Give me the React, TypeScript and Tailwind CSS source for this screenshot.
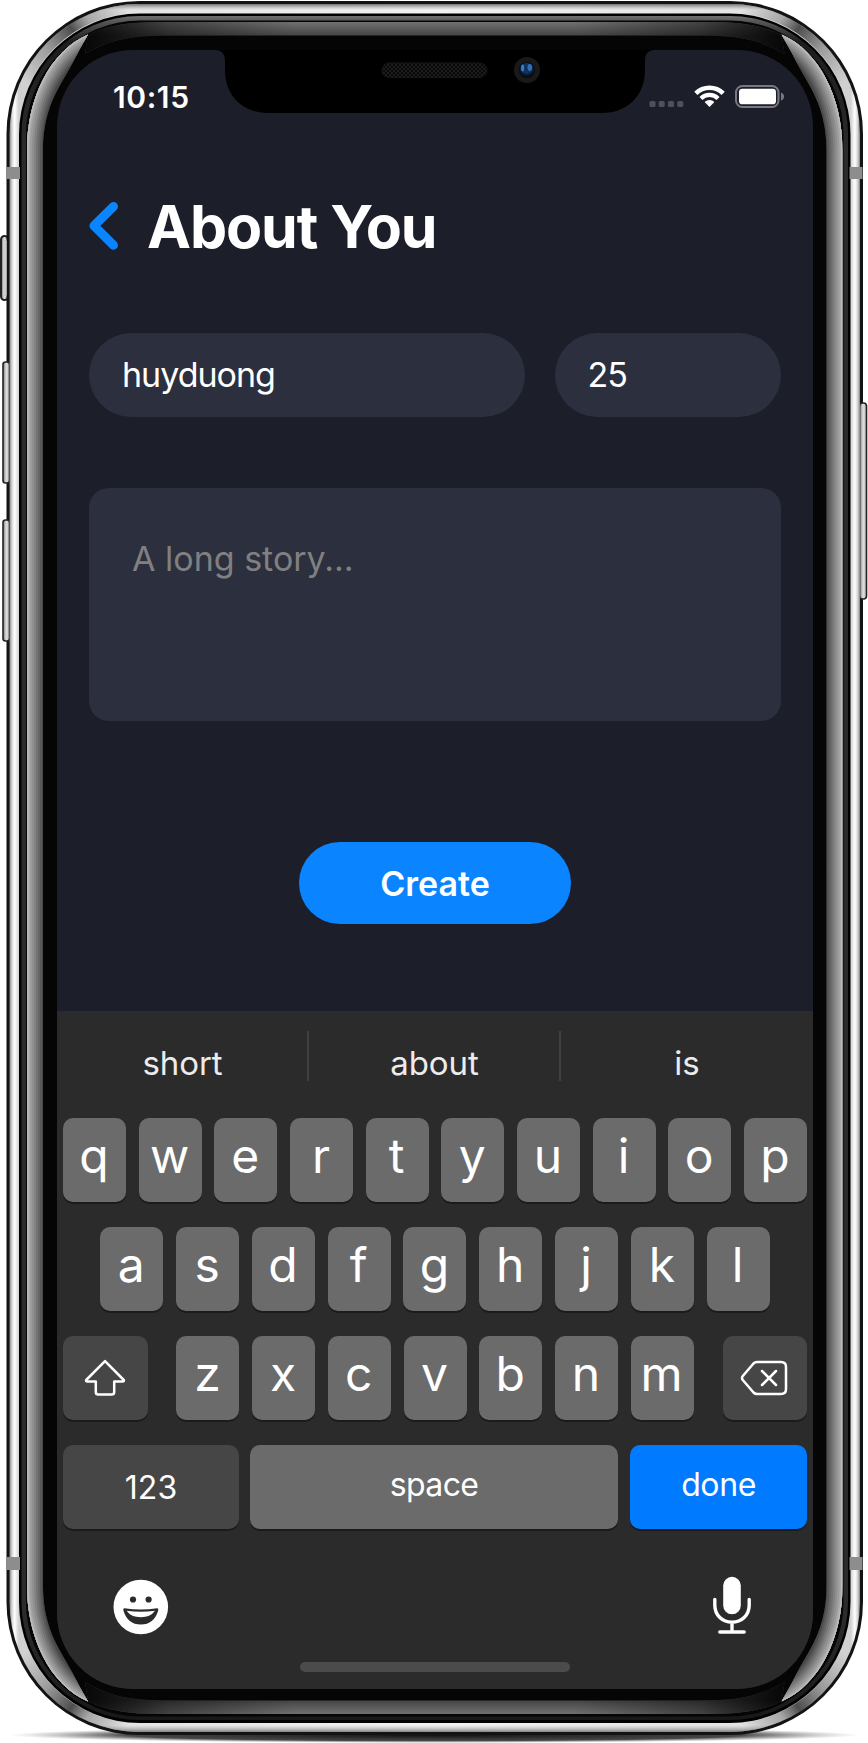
import React from "react";

const ROW_ONE = ["q", "w", "e", "r", "t", "y", "u", "i", "o", "p"];
const ROW_TWO = ["a", "s", "d", "f", "g", "h", "j", "k", "l"];
const ROW_THREE = ["z", "x", "c", "v", "b", "n", "m"];

const SHINE_STEPS = [
  { width: 46, color: "#2c2c2c" },
  { width: 36, color: "#484848" },
  { width: 30, color: "#585858" },
  { width: 26, color: "#666" },
  { width: 22, color: "#747474" },
  { width: 18, color: "#828282" },
  { width: 14, color: "#909090" },
  { width: 10, color: "#9c9c9c" },
  { width: 6, color: "#aaa" },
  { width: 3, color: "#bcbcbc" },
];

function CornerShine() {
  return (
    <>
      <path d="M14 134 A125.5 125.5 0 0 1 139.5 8.5" fill="none" stroke="url(#dusk)" strokeWidth="9" />
      <g clipPath="url(#crescent)" fill="none">
        <rect x="27" y="34" width="62" height="836" fill="#202020" />
        {SHINE_STEPS.map((s) => (
          <path key={s.width} d="M88 34 C50 51 27 98 27 150 V869" stroke={s.color} strokeWidth={s.width} />
        ))}
      </g>
    </>
  );
}

function DeviceFrame() {
  return (
    <svg className="absolute inset-0" width="868" height="1743" viewBox="0 0 868 1743" aria-hidden="true">
      <defs>
        <clipPath id="crescent">
          <path d="M88 34.5 C50 51 27 98 27 150 V869 H43 V150 C43 105 62 84 72 64 Q80 48 88 34.5Z" />
        </clipPath>
        <linearGradient id="dusk" gradientUnits="userSpaceOnUse" x1="26" x2="128" y1="84" y2="10">
          <stop offset="0" stopColor="#333" stopOpacity="0" />
          <stop offset="0.3" stopColor="#333" stopOpacity="0.35" />
          <stop offset="0.55" stopColor="#2a2a2a" stopOpacity="0.8" />
          <stop offset="0.7" stopColor="#444" stopOpacity="0.35" />
          <stop offset="1" stopColor="#333" stopOpacity="0" />
        </linearGradient>
        <linearGradient id="band" x1="0" x2="1" y1="0" y2="0">
          <stop offset="0" stopColor="#858585" />
          <stop offset="0.003" stopColor="#d8d8d8" />
          <stop offset="0.006" stopColor="#fff" />
          <stop offset="0.011" stopColor="#d0d0d0" />
          <stop offset="0.14" stopColor="#e4e4e4" />
          <stop offset="0.5" stopColor="#f1f1f1" />
          <stop offset="0.86" stopColor="#e4e4e4" />
          <stop offset="0.989" stopColor="#d0d0d0" />
          <stop offset="0.994" stopColor="#fff" />
          <stop offset="0.997" stopColor="#d8d8d8" />
          <stop offset="1" stopColor="#858585" />
        </linearGradient>
        <linearGradient id="bandTop" x1="0" x2="0" y1="0" y2="1">
          <stop offset="0" stopColor="#555" stopOpacity="0.8" />
          <stop offset="0.0035" stopColor="#999" stopOpacity="0" />
          <stop offset="0.996" stopColor="#999" stopOpacity="0" />
          <stop offset="1" stopColor="#555" stopOpacity="0.7" />
        </linearGradient>
        <linearGradient id="lip" x1="0" x2="0" y1="0" y2="1">
          <stop offset="0" stopColor="#707070" />
          <stop offset="0.003" stopColor="#585858" />
          <stop offset="0.015" stopColor="#1d1d1d" />
          <stop offset="0.08" stopColor="#2b2b2b" />
          <stop offset="0.94" stopColor="#2b2b2b" />
          <stop offset="1" stopColor="#181818" />
        </linearGradient>
        <linearGradient id="glassX" gradientUnits="userSpaceOnUse" x1="85" x2="784.5" y1="0" y2="0">
          <stop offset="0" stopColor="#000" stopOpacity="0.9" />
          <stop offset="0.12" stopColor="#000" stopOpacity="0.4" />
          <stop offset="0.3" stopColor="#000" stopOpacity="0" />
          <stop offset="0.7" stopColor="#000" stopOpacity="0" />
          <stop offset="0.88" stopColor="#000" stopOpacity="0.4" />
          <stop offset="1" stopColor="#000" stopOpacity="0.9" />
        </linearGradient>
        <linearGradient id="glassY" gradientUnits="userSpaceOnUse" x1="0" x2="0" y1="22" y2="36">
          <stop offset="0" stopColor="#707070" />
          <stop offset="1" stopColor="#444" />
        </linearGradient>
        <linearGradient id="key" x1="0" x2="1" y1="0" y2="0">
          <stop offset="0" stopColor="#777" />
          <stop offset="0.5" stopColor="#dedede" />
          <stop offset="1" stopColor="#bbb" />
        </linearGradient>
        <radialGradient id="ground">
          <stop offset="0" stopColor="#111" />
          <stop offset="0.72" stopColor="#333" stopOpacity="0.9" />
          <stop offset="1" stopColor="#888" stopOpacity="0" />
        </radialGradient>
      </defs>

      <ellipse cx="434.5" cy="1735" rx="425" ry="8" fill="url(#ground)" />

      <rect x="1" y="236" width="7" height="64" rx="3.5" fill="url(#key)" stroke="#222" strokeWidth="2" />
      <rect x="6.5" y="1" width="856.5" height="1734" rx="133" fill="#111413" />
      <rect x="859.5" y="403" width="7" height="196" rx="3" fill="url(#key)" stroke="#222" strokeWidth="1.6" />
      <rect x="3" y="362" width="6.5" height="121" rx="2.5" fill="url(#key)" stroke="#222" strokeWidth="1.6" />
      <rect x="3" y="520" width="6.5" height="121" rx="2.5" fill="url(#key)" stroke="#222" strokeWidth="1.6" />
      <rect x="3" y="240" width="3.6" height="56" rx="1.5" fill="#cfcfcf" />
      <rect x="9.5" y="4" width="850.5" height="1728" rx="130" fill="url(#band)" />
      <rect x="9.5" y="4" width="850.5" height="1728" rx="130" fill="url(#bandTop)" />
      <rect x="19" y="13.5" width="831.5" height="1709.5" rx="121" fill="#000" />
      <rect x="21.5" y="16" width="826.5" height="1704" rx="118" fill="url(#lip)" />
      <rect x="26" y="20.5" width="817.5" height="1696" rx="114" fill="#050505" />

      <g id="glass">
        <path d="M88 35 C108 25 130 22 160 22 H709.5 C739.5 22 761.5 25 781.5 35 L784.5 54 C758 39 739 35.5 700 35.5 H170 C130 35.5 111 39 85 54Z" fill="url(#glassY)" />
        <path d="M88 35 C108 25 130 22 160 22 H709.5 C739.5 22 761.5 25 781.5 35 L784.5 54 C758 39 739 35.5 700 35.5 H170 C130 35.5 111 39 85 54Z" fill="url(#glassX)" />
        <CornerShine />
        <g transform="translate(869.5 0) scale(-1 1)">
          <CornerShine />
        </g>
      </g>
      <use href="#glass" transform="translate(0 1736) scale(1 -1)" />

      <g fill="#8d8d8d">
        <rect x="7" y="167" width="13" height="12" />
        <rect x="849.5" y="167" width="13" height="12" />
        <rect x="7" y="1557" width="13" height="13" />
        <rect x="849.5" y="1557" width="13" height="13" />
      </g>
    </svg>
  );
}

function Notch() {
  return (
    <svg className="absolute left-[158px] top-0" width="440" height="65" viewBox="0 0 440 65" aria-hidden="true">
      <defs>
        <pattern id="mesh" width="4" height="4" patternUnits="userSpaceOnUse">
          <rect width="4" height="4" fill="#1d1d1d" />
          <rect width="2" height="2" fill="#080808" />
          <rect x="2" y="2" width="2" height="2" fill="#080808" />
        </pattern>
        <radialGradient id="lens" cx="0.5" cy="0.35" r="0.6">
          <stop offset="0" stopColor="#102f58" />
          <stop offset="0.55" stopColor="#12345f" />
          <stop offset="1" stopColor="#060b18" />
        </radialGradient>
      </defs>
      <path d="M0 0 H440 C433 0 430 4 430 11 V20 C430 45 413 63 387 63 H53 C27 63 10 45 10 20 V11 C10 4 7 0 0 0Z" fill="#000" />
      <rect x="167" y="13" width="105" height="14.5" rx="7.2" fill="url(#mesh)" stroke="#161616" />
      <circle cx="312" cy="20" r="13" fill="#191919" />
      <circle cx="312" cy="20" r="8" fill="#0c0c10" />
      <circle cx="311.7" cy="20" r="7" fill="url(#lens)" />
      <ellipse cx="307.6" cy="18" rx="1.5" ry="3.4" fill="#3a7fc6" />
      <ellipse cx="314.8" cy="17.5" rx="2.3" ry="3.4" fill="#2f6fb4" />
    </svg>
  );
}

function StatusBar() {
  return (
    <div className="flex h-[73px] shrink-0 justify-between pl-[56px] pr-[28px] pt-[28px]">
      <span className="text-[30px] font-semibold leading-[38px] tracking-[0.6px]">10:15</span>
      <div className="flex pt-[6px]">
        <svg width="35" height="25" viewBox="0 0 35 25" fill="#4f505b" aria-hidden="true">
          <rect x="0.5" y="17" width="6" height="6" rx="1.5" />
          <rect x="9.7" y="17" width="6" height="6" rx="1.5" />
          <rect x="19" y="17" width="6" height="6" rx="1.5" />
          <rect x="28.3" y="17" width="6" height="6" rx="1.5" />
        </svg>
        <svg className="ml-[10px]" width="31" height="25" viewBox="0 -1 31 25" fill="none" stroke="#fff" aria-hidden="true">
          <path d="M1.85 8.35 A19.3 19.3 0 0 1 29.15 8.35" strokeWidth="4.6" />
          <path d="M6.94 13.44 A12.1 12.1 0 0 1 24.06 13.44" strokeWidth="4.2" />
          <path d="M15.5 22 L10.6 17.1 A7 7 0 0 1 20.4 17.1Z" fill="#fff" stroke="none" />
        </svg>
        <svg className="ml-[10px]" width="50" height="25" viewBox="0 0 50 25" aria-hidden="true">
          <rect x="1" y="2" width="42.5" height="21" rx="6.5" fill="none" stroke="#777982" strokeWidth="2" />
          <rect x="4" y="4.8" width="37" height="15.5" rx="3.4" fill="#fff" />
          <path d="M46 8.5 Q49 9.5 49 12.5 T46 16.5Z" fill="#777982" />
        </svg>
      </div>
    </div>
  );
}

function Letter({ children }: { children: string }) {
  return (
    <div className="h-[84.5px] w-[63px] rounded-[10px] bg-[#6b6b6b] pr-px text-center text-[48px] font-normal leading-[76px] shadow-[0_2px_0_#1b1b1b]">
      {children}
    </div>
  );
}

function Keyboard() {
  return (
    <div className="flex grow flex-col bg-[#2b2b2b]">
      <div className="mt-[20px] flex h-[50px] text-center text-[33px] leading-[64px] text-[#ececec]">
        <span className="h-[50px] w-[250px] pl-px tracking-[-0.1px]">short</span>
        <span className="h-[50px] w-[254px] border-x-2 border-[#404040] pl-px tracking-[-0.1px]">about</span>
        <span className="h-[50px] w-[252px]">is</span>
      </div>
      <div className="mt-[36.5px] flex flex-col gap-[24.6px] px-[6px]">
        <div className="flex justify-between">
          {ROW_ONE.map((k) => <Letter key={k}>{k}</Letter>)}
        </div>
        <div className="flex justify-between px-[37.3px]">
          {ROW_TWO.map((k) => <Letter key={k}>{k}</Letter>)}
        </div>
        <div className="flex justify-between">
          <div className="flex h-[84.5px] w-[84.5px] items-center justify-center rounded-[10px] bg-[#464646] shadow-[0_2px_0_#1b1b1b]">
            <svg width="42" height="38" viewBox="0 0 42 38" fill="none" stroke="#fff" strokeWidth="2.5" strokeLinejoin="round" aria-hidden="true">
              <path d="M21 2.2 L39.8 21 Q40.5 22.5 38.5 22.5 H30.2 V33 Q30.2 35.6 27.6 35.6 H14.4 Q11.8 35.6 11.8 33 V22.5 H3.5 Q1.5 22.5 2.2 21Z" />
            </svg>
          </div>
          <div className="flex gap-[12.7px]">
            {ROW_THREE.map((k) => <Letter key={k}>{k}</Letter>)}
          </div>
          <div className="flex h-[84.5px] w-[84.5px] items-center justify-center rounded-[10px] bg-[#464646] pr-[2px] shadow-[0_2px_0_#1b1b1b]">
            <svg width="48" height="36" viewBox="0 0 48 36" fill="none" stroke="#fff" strokeWidth="2.5" strokeLinejoin="round" strokeLinecap="round" aria-hidden="true">
              <path d="M17 2 H41 Q46 2 46 7 V29 Q46 34 41 34 H17 Q15 34 13.5 32.5 L2.8 20 Q1.2 18 2.8 16 L13.5 3.5 Q15 2 17 2Z" />
              <path d="M22 11 L36 25 M36 11 L22 25" />
            </svg>
          </div>
        </div>
        <div className="flex text-center text-[32px]">
          <div className="h-[84.5px] w-[176px] rounded-[10px] bg-[#464646] leading-[85px] shadow-[0_2px_0_#1b1b1b]">123</div>
          <div className="ml-[11.3px] h-[84.5px] w-[367.5px] rounded-[10px] bg-[#6b6b6b] leading-[80px] tracking-[-0.6px] shadow-[0_2px_0_#1b1b1b]">space</div>
          <div className="ml-[12.5px] h-[84.5px] w-[176.5px] rounded-[10px] bg-[#007aff] leading-[80px] tracking-[-0.4px] shadow-[0_2px_0_#1b1b1b]">done</div>
        </div>
      </div>
      <div className="mt-[46.7px] flex justify-between pl-[56px] pr-[62px]">
        <svg className="mt-[3.5px]" width="56" height="56" viewBox="0 0 56 56" aria-hidden="true">
          <circle cx="27.8" cy="28" r="27.3" fill="#fff" />
          <circle cx="20" cy="20.5" r="3.1" fill="#2b2b2b" />
          <circle cx="35.6" cy="20.5" r="3.1" fill="#2b2b2b" />
          <path d="M11.5 29.2 Q27.8 32 44.1 29.2 Q45.8 29.3 45.2 31.5 Q41 45.5 27.8 45.5 Q14.6 45.5 10.4 31.5 Q9.8 29.3 11.5 29.2Z" fill="#2b2b2b" />
          <path d="M13.6 31.7 Q27.8 34 42 31.7 Q37.5 38.2 27.8 38.2 Q18 38.2 13.6 31.7Z" fill="#fff" />
        </svg>
        <svg width="38" height="59" viewBox="0 0 38 59" aria-hidden="true">
          <rect x="10.2" y="0.8" width="17.6" height="37.5" rx="8.8" fill="#fff" />
          <path d="M1.8 23.5 V29 C1.8 39.5 9.5 46.2 19 46.2 S36.2 39.5 36.2 29 V23.5 M19 46.2 V56 M6.8 56 H31.2" fill="none" stroke="#fff" strokeWidth="3.4" strokeLinecap="round" />
        </svg>
      </div>
      <div className="mx-auto mt-[27px] h-[10px] w-[270px] rounded-full bg-[#4b4b4b]" />
    </div>
  );
}

export default function App() {
  return (
    <div className="relative h-[1743px] w-[868px] overflow-hidden bg-white pl-[57px] pt-[50px] font-['Inter',sans-serif] text-white">
      <DeviceFrame />
      <main className="relative flex h-[1639px] w-[756px] flex-col overflow-hidden rounded-[76px] bg-[#1c1e29]">
        <StatusBar />
        <header className="mt-[67px] flex h-[72px] shrink-0 items-center pl-[31px]">
          <svg width="31" height="50" viewBox="0 0 31 50" fill="none" stroke="#0a84ff" strokeWidth="9" strokeLinecap="round" strokeLinejoin="round" aria-hidden="true">
            <path d="M25.5 5.5 L6 24.8 L25.5 44.2" />
          </svg>
          <h1 className="ml-[28px] whitespace-nowrap pt-[2px] text-[59px] font-bold leading-[70px] tracking-[-1.1px]">About You</h1>
        </header>
        <div className="mx-[32px] mt-[70.5px] flex h-[84.5px] shrink-0 gap-[30px] text-[34px] leading-[84px]">
          <div className="w-[436px] rounded-full bg-[#2c2f3e] pl-[33px] tracking-[-1px]">huyduong</div>
          <div className="w-[226px] rounded-full bg-[#2c2f3e] pl-[32.5px] tracking-[-0.9px]">25</div>
        </div>
        <div className="mx-[32px] mt-[71px] h-[233px] w-[692px] shrink-0 rounded-[20px] bg-[#2c2f3e] pl-[43px] pt-[50px] text-[34px] leading-[42px] text-[#808080]">
          A long story...
        </div>
        <button className="mx-auto mt-[121px] h-[82px] w-[272px] shrink-0 rounded-full bg-[#0a84ff] text-[34px] font-semibold leading-[84px]">
          Create
        </button>
        <div className="mt-[87px] flex grow flex-col">
          <Keyboard />
        </div>
        <Notch />
      </main>
    </div>
  );
}
